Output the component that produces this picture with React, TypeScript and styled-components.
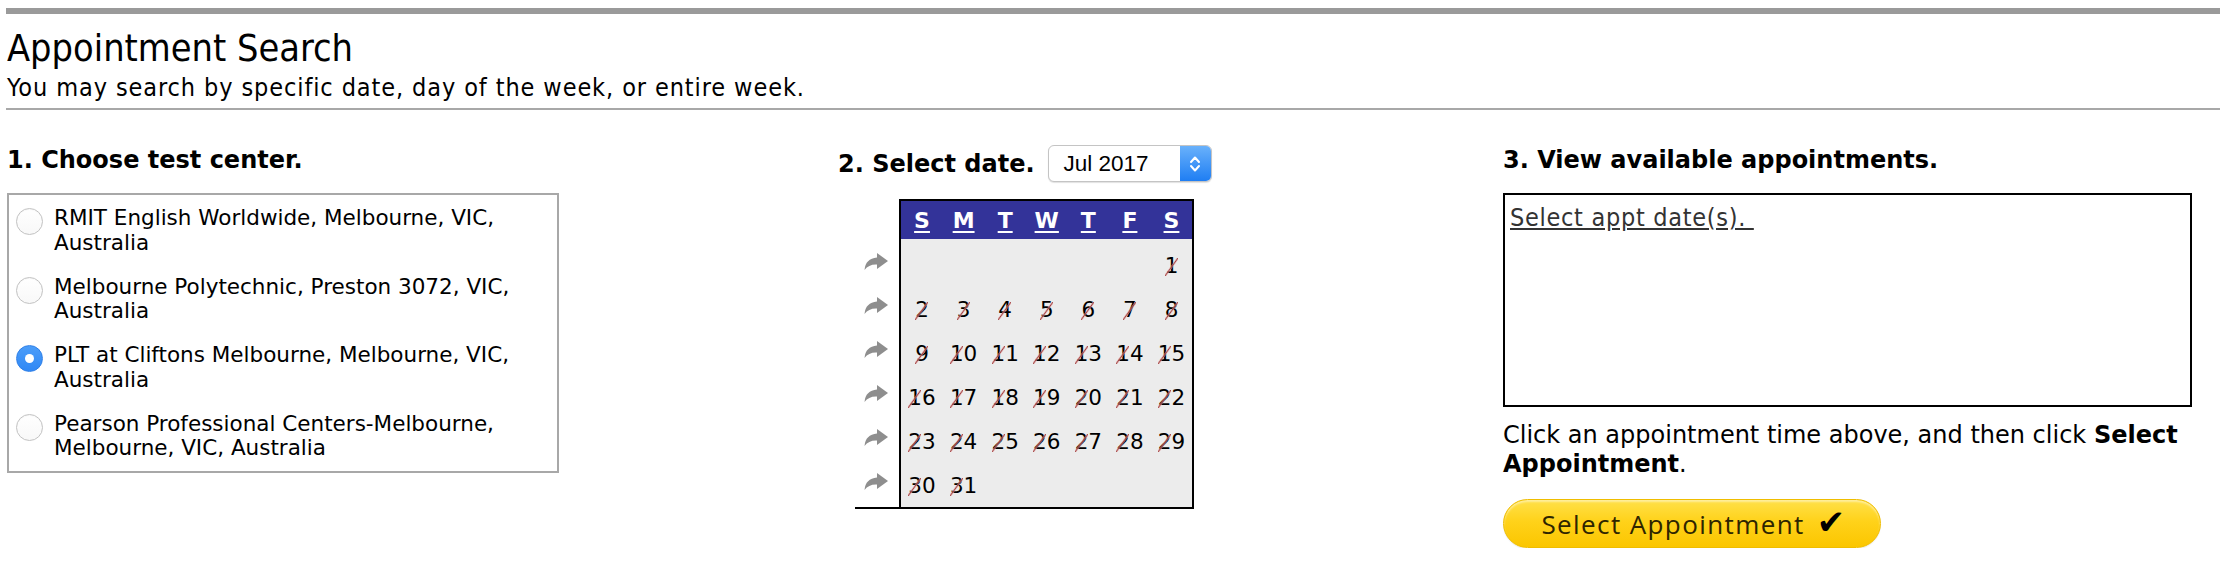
import React from "react";
import styled, { createGlobalStyle } from "styled-components";

const GlobalStyle = createGlobalStyle`
  html, body { margin: 0; padding: 0; background: #fff; }
  body { font-family: "DejaVu Sans", Verdana, sans-serif; color: #000; }
`;

const Page = styled.div`
  width: 2214px;
  padding: 8px 0 0 6px;
`;

const TopBar = styled.div`
  height: 6px;
  background: #9a9a9a;
`;

const Title = styled.h1`
  margin: 12px 0 0 1px;
  font-family: "DejaVu Sans Condensed", "DejaVu Sans", sans-serif;
  font-stretch: condensed;
  font-weight: normal;
  font-size: 37.6px;
  line-height: 44px;
`;

const Subtitle = styled.div`
  margin: 3px 0 0 1px;
  font-family: "DejaVu Sans Condensed", "DejaVu Sans", sans-serif;
  font-stretch: condensed;
  font-size: 25px;
  letter-spacing: 0.9px;
  line-height: 29px;
`;

const Rule = styled.div`
  margin-top: 6px;
  height: 2px;
  background: #a8a8a8;
`;

const Columns = styled.div`
  display: grid;
  grid-template-columns: 831px 665px 689px;
  margin-top: 35px;
  padding-left: 1px;
`;

const Column = styled.div`
  display: flex;
  flex-direction: column;
  align-items: flex-start;
`;

const Heading = styled.div`
  font-weight: bold;
  font-size: 24px;
  line-height: 30px;
  white-space: nowrap;
`;

const CenterBox = styled.div`
  border: 2px solid #a8a8a8;
  box-sizing: border-box;
  width: 552px;
  height: 280px;
  margin-top: 18px;
  padding: 11px 8px 0 7px;
  display: flex;
  flex-direction: column;
  gap: 19.5px;
`;

const Option = styled.label`
  display: flex;
  align-items: flex-start;
  gap: 11px;
  font-size: 21.5px;
  line-height: 24.5px;
`;

const Radio = styled.span<{ $checked?: boolean }>`
  flex: none;
  width: 27px;
  height: 27px;
  margin-top: 2px;
  border-radius: 50%;
  box-sizing: border-box;
  position: relative;
  ${(p) =>
    p.$checked
      ? `background: linear-gradient(#4b9df9, #3088f5); border: 1px solid #2f80e8;
         &::after { content: ""; position: absolute; left: 50%; top: 50%; width: 9px; height: 9px;
         margin: -4.5px 0 0 -4.5px; border-radius: 50%; background: #fff; }`
      : `background: linear-gradient(#ffffff, #f8f8f8); border: 1px solid #c2c2c2;
         box-shadow: inset 0 1px 1px rgba(0,0,0,0.03);`}
`;

const DateHead = styled.div`
  display: inline-flex;
  flex-direction: column;
  align-items: center;
`;

const DateRow = styled.div`
  display: flex;
  align-items: center;
  gap: 13px;
`;

const Select = styled.div`
  position: relative;
  width: 164px;
  height: 37px;
  box-sizing: border-box;
  border: 1px solid #c4c4c4;
  border-radius: 6px;
  background: #fff;
  box-shadow: 0 1px 1px rgba(0, 0, 0, 0.12);
  display: flex;
  align-items: center;
  font-family: "Liberation Sans", Arial, sans-serif;
  font-size: 22.5px;
  padding-left: 15px;
  overflow: hidden;
`;

const SelectArrows = styled.span`
  position: absolute;
  right: 0;
  top: 0;
  bottom: 0;
  width: 31px;
  background: linear-gradient(#69b1fb, #1f7ef3);
  display: flex;
  align-items: center;
  justify-content: center;
`;

const CalWrap = styled.div`
  margin-top: 17px;
  display: flex;
  border-bottom: 2px solid #000;
`;

const ArrowCol = styled.div`
  width: 44px;
  padding-top: 40px;
  display: flex;
  flex-direction: column;
`;

const ArrowCell = styled.div`
  height: 44px;
  display: flex;
  align-items: center;
  padding-left: 8px;
`;

const Cal = styled.div`
  width: 295px;
  box-sizing: border-box;
  border: 2px solid #000;
  border-bottom: 0;
  background: #ececec;
  padding-bottom: 4px;
`;

const CalHead = styled.div`
  height: 38px;
  background: #333399;
  display: grid;
  grid-template-columns: repeat(7, 1fr);
  align-items: center;
`;

const DayName = styled.span`
  color: #fff;
  font-weight: bold;
  font-size: 22px;
  text-align: center;
  text-decoration: underline;
  text-decoration-thickness: 2px;
  text-underline-offset: 3px;
`;

const Week = styled.div`
  height: 44px;
  display: grid;
  grid-template-columns: repeat(7, 1fr);
  align-items: center;
`;

const DayCell = styled.span`
  text-align: center;
  font-size: 21.5px;
  line-height: 26px;
  padding-top: 9px;
`;

const Num = styled.span`
  position: relative;
  &::before {
    content: "";
    position: absolute;
    left: 0px;
    bottom: 2px;
    width: 13px;
    height: 18px;
    background: linear-gradient(
      to bottom right,
      transparent calc(50% - 1.5px),
      rgba(220, 140, 140, 0.55) calc(50% - 0.8px),
      #a04444 50%,
      rgba(220, 140, 140, 0.55) calc(50% + 0.8px),
      transparent calc(50% + 1.5px)
    );
  }
`;

const ApptBox = styled.div`
  margin-top: 18px;
  width: 689px;
  height: 214px;
  box-sizing: border-box;
  border: 2px solid #000;
  padding: 9px 0 0 5px;
`;

const ApptLink = styled.a`
  color: #333;
  font-family: "DejaVu Sans Condensed", "DejaVu Sans", sans-serif;
  font-stretch: condensed;
  font-size: 25px;
  letter-spacing: 0.7px;
  line-height: 28px;
  text-decoration: underline;
  white-space: pre;
`;

const Help = styled.p`
  margin: 14px 0 0;
  width: 689px;
  font-size: 24px;
  line-height: 29px;
`;

const ApptButton = styled.button`
  margin-top: 20px;
  width: 378px;
  height: 49px;
  border-radius: 25px;
  border: 1px solid #efbd00;
  background: linear-gradient(#ffe14a, #ffd21a 45%, #fbc600);
  box-shadow: inset 0 2px 2px rgba(255, 255, 255, 0.45), 0 1px 1px rgba(0, 0, 0, 0.08);
  display: flex;
  align-items: center;
  justify-content: center;
  gap: 12px;
  padding: 0 0 0 4px;
  font-family: "Open Sans", "DejaVu Sans", sans-serif;
  font-size: 26px;
  letter-spacing: 1.4px;
  color: #2e2500;
  cursor: pointer;
`;

const Check = styled.span`
  font-family: "DejaVu Sans", sans-serif;
  font-size: 34px;
  color: #000;
  line-height: 1;
  margin-top: -4px;
`;

const ForwardIcon = () => (
  <svg width="26" height="19" viewBox="0 0 26 19">
    <path
      d="M14 1 L25 9 L14 17 L14 12.5 Q6 12 1.5 18 Q2.5 6.5 14 5.5 Z"
      fill="#8e8e8e"
    />
  </svg>
);

const centers = [
  "RMIT English Worldwide, Melbourne, VIC, Australia",
  "Melbourne Polytechnic, Preston 3072, VIC, Australia",
  "PLT at Cliftons Melbourne, Melbourne, VIC, Australia",
  "Pearson Professional Centers-Melbourne, Melbourne, VIC, Australia",
];

const weeks: (number | null)[][] = [
  [null, null, null, null, null, null, 1],
  [2, 3, 4, 5, 6, 7, 8],
  [9, 10, 11, 12, 13, 14, 15],
  [16, 17, 18, 19, 20, 21, 22],
  [23, 24, 25, 26, 27, 28, 29],
  [30, 31, null, null, null, null, null],
];

export default function App() {
  return (
    <>
      <GlobalStyle />
      <Page>
        <TopBar />
        <Title>Appointment Search</Title>
        <Subtitle>You may search by specific date, day of the week, or entire week.</Subtitle>
        <Rule />
        <Columns>
          <Column>
            <Heading>1. Choose test center.</Heading>
            <CenterBox>
              {centers.map((c, i) => (
                <Option key={c}>
                  <Radio $checked={i === 2} />
                  <span>{c}</span>
                </Option>
              ))}
            </CenterBox>
          </Column>
          <Column>
            <DateHead>
              <DateRow>
                <Heading>2. Select date.</Heading>
                <Select>
                  Jul 2017
                  <SelectArrows>
                    <svg width="12" height="20" viewBox="0 0 12 20">
                      <path d="M2 8 L6 3.5 L10 8 M2 12 L6 16.5 L10 12" fill="none" stroke="#fff" strokeWidth="2" strokeLinecap="round" strokeLinejoin="round" />
                    </svg>
                  </SelectArrows>
                </Select>
              </DateRow>
              <CalWrap>
                <ArrowCol>
                  {weeks.map((_, i) => (
                    <ArrowCell key={i}>
                      <ForwardIcon />
                    </ArrowCell>
                  ))}
                </ArrowCol>
                <Cal>
                  <CalHead>
                    {["S", "M", "T", "W", "T", "F", "S"].map((d, i) => (
                      <DayName key={i}>{d}</DayName>
                    ))}
                  </CalHead>
                  {weeks.map((w, i) => (
                    <Week key={i}>
                      {w.map((d, j) => (
                        <DayCell key={j}>{d !== null ? <Num>{d}</Num> : null}</DayCell>
                      ))}
                    </Week>
                  ))}
                </Cal>
              </CalWrap>
            </DateHead>
          </Column>
          <Column>
            <Heading>3. View available appointments.</Heading>
            <ApptBox>
              <ApptLink href="#">Select appt date(s). </ApptLink>
            </ApptBox>
            <Help>
              Click an appointment time above, and then click <b>Select</b> <b>Appointment</b>.
            </Help>
            <ApptButton type="button">
              <span>Select Appointment</span>
              <Check>✔</Check>
            </ApptButton>
          </Column>
        </Columns>
      </Page>
    </>
  );
}
